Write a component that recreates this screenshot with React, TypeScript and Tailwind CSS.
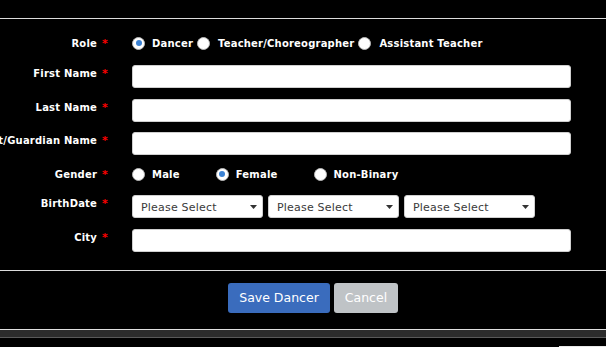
import React from "react";

function Radio({ checked }: { checked?: boolean }) {
  return (
    <span className="flex h-[13px] w-[13px] shrink-0 items-center justify-center rounded-full border border-[#b9b9b9] bg-white">
      {checked && <span className="h-[6px] w-[6px] rounded-full bg-[#3b82d4]" />}
    </span>
  );
}

function Label({ text }: { text: string }) {
  return (
    <div className="flex w-[108px] shrink-0 items-start justify-end whitespace-nowrap text-[10px] font-bold leading-[17px] tracking-[0.2px] text-white">
      <span>{text}</span>
      <span className="ml-[5px] text-[11px] text-[#ff0000]">*</span>
    </div>
  );
}

function TextInput() {
  return <div className="h-[23px] w-[439px] rounded-[3px] border border-[#cfcfcf] bg-white" />;
}

function Select() {
  return (
    <div className="flex h-[23px] w-[131px] items-center justify-between rounded-[3px] border border-[#cfcfcf] bg-white pl-[8px] pr-[5px]">
      <span className="pt-[1px] text-[11px] leading-none tracking-[0.2px] text-[#3a3a3a]">Please Select</span>
      <svg width="7" height="4" viewBox="0 0 7 4">
        <polygon points="0,0 7,0 3.5,4" fill="#333" />
      </svg>
    </div>
  );
}

export default function App() {
  return (
    <div
      className="h-[347px] w-full overflow-hidden bg-black pt-[18px]"
      style={{ fontFamily: '"DejaVu Sans", Verdana, sans-serif' }}
    >
      <div className="h-px bg-[#dcdcdc]" />

      {/* Role */}
      <div className="mt-[16px] flex h-[16px] items-start">
        <Label text="Role" />
        <div className="ml-[24px] flex h-[16px] items-center text-[10px] font-bold tracking-[0.2px] text-white">
          <Radio checked />
          <span className="ml-[7px]">Dancer</span>
          <span className="ml-[4px]"><Radio /></span>
          <span className="ml-[8px]">Teacher/Choreographer</span>
          <span className="ml-[4px]"><Radio /></span>
          <span className="ml-[8px]">Assistant Teacher</span>
        </div>
      </div>

      {/* First Name */}
      <div className="mt-[14px] flex items-start">
        <Label text="First Name" />
        <div className="ml-[24px]"><TextInput /></div>
      </div>

      {/* Last Name */}
      <div className="mt-[11px] flex items-start">
        <Label text="Last Name" />
        <div className="ml-[24px]"><TextInput /></div>
      </div>

      {/* Parent/Guardian Name */}
      <div className="mt-[10px] flex items-start">
        <Label text="Parent/Guardian Name" />
        <div className="ml-[24px]"><TextInput /></div>
      </div>

      {/* Gender */}
      <div className="mt-[11px] flex h-[16px] items-start">
        <Label text="Gender" />
        <div className="ml-[24px] flex h-[16px] items-center text-[10px] font-bold tracking-[0.2px] text-white">
          <Radio />
          <span className="ml-[7px] mr-[36px]">Male</span>
          <Radio checked />
          <span className="ml-[7px] mr-[36px]">Female</span>
          <Radio />
          <span className="ml-[7px]">Non-Binary</span>
        </div>
      </div>

      {/* BirthDate */}
      <div className="mt-[13px] flex items-start">
        <Label text="BirthDate" />
        <div className="ml-[24px] flex gap-[5px]">
          <Select />
          <Select />
          <Select />
        </div>
      </div>

      {/* City */}
      <div className="mt-[11px] flex items-start">
        <Label text="City" />
        <div className="ml-[24px]"><TextInput /></div>
      </div>

      <div className="mt-[18px] h-px bg-[#dcdcdc]" />

      <div className="mt-[12px] flex justify-center gap-[4px] pl-[20px]">
        <button className="h-[30px] w-[102px] rounded-[3px] bg-[#3a6cbd] text-[12.5px] text-white">
          Save Dancer
        </button>
        <button className="h-[30px] w-[64px] rounded-[3px] bg-[#bfc3c6] text-[12.5px] text-white">
          Cancel
        </button>
      </div>

      <div className="mt-[16px] h-px bg-[#e0e0e0]" />
      <div className="h-[7px] bg-[#2c2c2c]" />
      <div className="h-px bg-[#5a5a5a]" />
      <div className="flex h-[9px] items-end justify-end">
        <div className="h-px w-[47px] bg-[#e8e8e8]" />
      </div>
    </div>
  );
}
